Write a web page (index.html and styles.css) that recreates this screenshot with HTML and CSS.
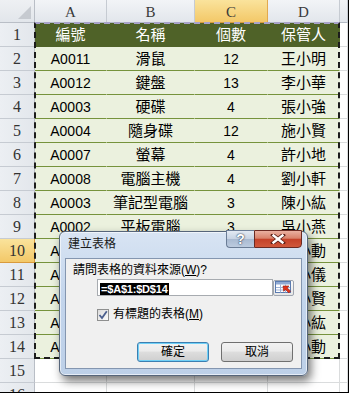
FILE: index.html
```html
<!DOCTYPE html>
<html lang="zh-Hant">
<head>
<meta charset="utf-8">
<title>建立表格</title>
<link rel="stylesheet" href="styles.css">
</head>
<body>
<div class="frame">
  <div class="sheet">
    <div class="cell corner"><svg width="15" height="15" viewBox="0 0 15 15"><polygon points="14,1 14,14 1,14" fill="#c6cad0"/></svg></div>
    <div class="cell ch">A</div><div class="cell ch">B</div><div class="cell ch on">C</div><div class="cell ch">D</div><div class="cell ch e"></div>

    <div class="cell rh">1</div><div class="cell th">編號</div><div class="cell th">名稱</div><div class="cell th">個數</div><div class="cell th">保管人</div><div class="cell e"></div>
    <div class="cell rh">2</div><div class="cell td num">A0011</div><div class="cell td">滑鼠</div><div class="cell td num">12</div><div class="cell td">王小明</div><div class="cell e"></div>
    <div class="cell rh">3</div><div class="cell td num">A0012</div><div class="cell td">鍵盤</div><div class="cell td num">13</div><div class="cell td">李小華</div><div class="cell e"></div>
    <div class="cell rh">4</div><div class="cell td num">A0003</div><div class="cell td">硬碟</div><div class="cell td num">4</div><div class="cell td">張小強</div><div class="cell e"></div>
    <div class="cell rh">5</div><div class="cell td num">A0004</div><div class="cell td">隨身碟</div><div class="cell td num">12</div><div class="cell td">施小賢</div><div class="cell e"></div>
    <div class="cell rh">6</div><div class="cell td num">A0007</div><div class="cell td">螢幕</div><div class="cell td num">4</div><div class="cell td">許小地</div><div class="cell e"></div>
    <div class="cell rh">7</div><div class="cell td num">A0008</div><div class="cell td">電腦主機</div><div class="cell td num">4</div><div class="cell td">劉小軒</div><div class="cell e"></div>
    <div class="cell rh">8</div><div class="cell td num">A0003</div><div class="cell td">筆記型電腦</div><div class="cell td num">3</div><div class="cell td">陳小紘</div><div class="cell e"></div>
    <div class="cell rh">9</div><div class="cell td num">A0002</div><div class="cell td">平板電腦</div><div class="cell td num">3</div><div class="cell td">吳小燕</div><div class="cell e"></div>
    <div class="cell rh on">10</div><div class="cell td num">A0010</div><div class="cell td">投影機</div><div class="cell td num">2</div><div class="cell td">林小動</div><div class="cell e"></div>
    <div class="cell rh">11</div><div class="cell td num">A0013</div><div class="cell td">印表機</div><div class="cell td num">2</div><div class="cell td">黃小儀</div><div class="cell e"></div>
    <div class="cell rh">12</div><div class="cell td num">A0015</div><div class="cell td">掃描器</div><div class="cell td num">1</div><div class="cell td">施小賢</div><div class="cell e"></div>
    <div class="cell rh">13</div><div class="cell td num">A0016</div><div class="cell td">喇叭</div><div class="cell td num">5</div><div class="cell td">陳小紘</div><div class="cell e"></div>
    <div class="cell rh">14</div><div class="cell td num">A0018</div><div class="cell td">麥克風</div><div class="cell td num">6</div><div class="cell td">林小動</div><div class="cell e"></div>
    <div class="cell rh">15</div><div class="cell"></div><div class="cell"></div><div class="cell"></div><div class="cell"></div><div class="cell e"></div>
    <div class="cell rh">16</div><div class="cell"></div><div class="cell"></div><div class="cell"></div><div class="cell"></div><div class="cell e"></div>

    <div class="ants"></div>
  </div>

  <div class="dlg">
    <div class="dlg-title">建立表格</div>
    <div class="caps">
      <span class="cap-help">?</span>
      <span class="cap-close"><svg width="16" height="10" viewBox="0 0 16 10"><path d="M3 1 L13 9 M13 1 L3 9" stroke="#5a1e16" stroke-width="4" stroke-linecap="square"/><path d="M3.5 1.5 L12.5 8.5 M12.5 1.5 L3.5 8.5" stroke="#ffffff" stroke-width="2.4" stroke-linecap="square"/></svg></span>
    </div>
    <div class="dlg-body">
      <div class="q">請問表格的資料來源(<u>W</u>)?</div>
      <div class="ref">
        <div class="ref-input"><span class="selt">=$A$1:$D$14</span></div>
        <div class="ref-btn"><svg width="17" height="13" viewBox="0 0 17 13"><rect x="0.5" y="0.5" width="15" height="11" fill="#ffffff" stroke="#5b7bb0"/><rect x="1" y="1" width="14" height="2.5" fill="#8fa9d3"/><path d="M1 6.5 H15 M1 9 H15 M5.5 3.5 V11.5 M10.5 3.5 V11.5" stroke="#9fb3d6" stroke-width="1"/><path d="M8 5 L14 5 L12.2 6.8 L15.5 10.2 L13.8 11.9 L10.5 8.5 L8.7 10.3 Z" fill="#e0321b" stroke="#9b1a0c" stroke-width="0.6"/></svg></div>
      </div>
      <label class="chk"><span class="box"><svg width="10" height="10" viewBox="0 0 10 10"><path d="M1.5 5 L4 8 L8.8 1.3" fill="none" stroke="#4b5f8e" stroke-width="1.8"/></svg></span><span class="chk-text">有標題的表格(<u>M</u>)</span></label>
      <div class="btns">
        <button class="btn def">確定</button>
        <button class="btn">取消</button>
      </div>
    </div>
  </div>
</div>
</body>
</html>
```

FILE: styles.css
```css
* {
  box-sizing: border-box;
  margin: 0;
  padding: 0;
}

html,
body {
  width: 349px;
  height: 393px;
  overflow: hidden;
  background: #ffffff;
}

body {
  font-family: "Liberation Sans", "Noto Sans CJK TC", sans-serif;
}

.frame {
  position: relative;
  width: 349px;
  height: 393px;
  overflow: hidden;
  border-right: 1px solid #000000;
  border-bottom: 1px solid #000000;
}

.sheet {
  position: relative;
  display: grid;
  grid-template-columns: 35px 72px 88px 73px 72px 1fr;
  grid-template-rows: 23px repeat(16, 24px);
}

.cell {
  display: flex;
  align-items: center;
  justify-content: center;
  white-space: nowrap;
  overflow: hidden;
  border-right: 1px solid #dadcdd;
  border-bottom: 1px solid #dadcdd;
  font-size: 15px;
  line-height: 16px;
  color: #000000;
}

.corner {
  justify-content: flex-end;
  align-items: flex-end;
  padding: 0 2px 2px 0;
  background: linear-gradient(#eef0f3, #e2e6eb);
  border-right-color: #b9bec6;
  border-bottom-color: #b9bec6;
}

.ch {
  background: linear-gradient(#f2f4f7, #e2e6ec);
  border-right-color: #c6cbd2;
  border-bottom-color: #b3bac4;
  font-family: "Liberation Serif", serif;
  font-size: 15px;
  color: #3a3a3a;
  padding-top: 1px;
}

.ch.on {
  background: linear-gradient(#fae39c, #f3c868);
  border-right-color: #e2a94f;
  border-bottom-color: #d99a3c;
}

.rh {
  background: linear-gradient(90deg, #eceff3, #e3e7ec);
  border-right-color: #b9bec6;
  border-bottom-color: #c6cbd2;
  font-family: "Liberation Serif", serif;
  font-size: 16px;
  color: #333333;
}

.rh.on {
  background: linear-gradient(#fae39c, #f3c868);
  border-bottom-color: #d99a3c;
  border-right-color: #d99a3c;
}

.th {
  background: #4f6228;
  color: #ffffff;
  border-right-color: #4f6228;
  border-bottom-color: #4f6228;
}

.td {
  background: #ebf1de;
  border-right-color: #ebf1de;
  border-bottom-color: #76933c;
}

.num {
  font-size: 14px;
}

.ants {
  position: absolute;
  left: 34px;
  top: 22px;
  width: 306px;
  height: 337px;
  border: 2px dashed #1c1c1c;
  border-top-color: #a9a3cb;
  pointer-events: none;
}

/* dialog */
.dlg {
  position: absolute;
  left: 59px;
  top: 231px;
  width: 249px;
  height: 145px;
  display: flex;
  flex-direction: column;
  padding: 0 5px 6px 5px;
  border: 1px solid #56657a;
  border-radius: 6px;
  background: linear-gradient(#d8e4f3, #c3d5ec 45%, #bdd0e8);
  box-shadow: 3px 5px 10px rgba(0, 0, 0, 0.55), inset 0 0 0 1px rgba(255, 255, 255, 0.6);
}

.dlg-title {
  height: 26px;
  padding: 5px 0 0 3px;
  font-size: 12px;
  line-height: 14px;
  color: #1a1a1a;
}

.caps {
  position: absolute;
  top: -2px;
  right: 5px;
  display: flex;
  height: 18px;
}

.cap-help {
  width: 28px;
  height: 18px;
  border: 1px solid #6a7c95;
  border-right: none;
  border-radius: 0 0 0 4px;
  background: linear-gradient(#e3eaf3, #c8d4e4 48%, #a9bad1 52%, #bccbdf);
  font-family: "Liberation Sans", sans-serif;
  font-weight: bold;
  font-size: 14px;
  line-height: 16px;
  text-align: center;
  color: #ffffff;
  text-shadow: 0 0 2px #2b3a52, 0 0 1px #2b3a52;
}

.cap-close {
  width: 48px;
  height: 18px;
  display: flex;
  align-items: center;
  justify-content: center;
  border: 1px solid #6b2a22;
  border-radius: 0 0 4px 0;
  background: linear-gradient(#eab0a1, #d9826b 45%, #c54229 52%, #d0583b);
}

.dlg-body {
  flex: 1;
  display: flex;
  flex-direction: column;
  padding: 4px 7px 0 7px;
  background: #f0f0f0;
  border: 1px solid #8496b0;
  font-size: 12px;
  color: #000000;
}

.q {
  height: 14px;
  line-height: 14px;
}

.ref {
  display: flex;
  align-items: center;
  height: 17px;
  margin: 2px 0 0 24px;
}

.ref-input {
  flex: 1;
  height: 17px;
  padding: 2px 0 0 2px;
  background: #ffffff;
  border: 1px solid #a7abb0;
}

.selt {
  display: inline-block;
  height: 12px;
  padding: 0 1px;
  background: #000000;
  color: #ffffff;
  font-size: 11px;
  line-height: 12px;
  font-weight: bold;
  letter-spacing: -0.2px;
}

.ref-btn {
  width: 21px;
  height: 16px;
  display: flex;
  align-items: center;
  justify-content: center;
  border: 1px solid #9ea5b0;
  border-radius: 2px;
  background: linear-gradient(#fbfbfb, #e6e6e6);
}

.chk {
  display: flex;
  align-items: center;
  gap: 4px;
  height: 13px;
  margin: 12px 0 0 24px;
  line-height: 13px;
}

.chk-text {
  white-space: nowrap;
}

.box {
  width: 12px;
  height: 12px;
  display: flex;
  align-items: center;
  justify-content: center;
  border: 1px solid #8e8f8f;
  background: linear-gradient(135deg, #dcdcdc, #fbfbfb);
}

.btns {
  display: flex;
  justify-content: flex-end;
  gap: 12px;
  margin: 21px 1px 0 0;
}

.btn {
  width: 72px;
  height: 20px;
  border: 1px solid #707070;
  border-radius: 3px;
  background: linear-gradient(#f2f2f2, #ebebeb 45%, #dddddd 50%, #cfcfcf);
  font-family: "Liberation Sans", "Noto Sans CJK TC", sans-serif;
  font-size: 12px;
  line-height: 16px;
  color: #000000;
}

.btn.def {
  border-color: #3c7fb1;
  box-shadow: inset 0 0 0 1px #6fd0f7;
}
```
